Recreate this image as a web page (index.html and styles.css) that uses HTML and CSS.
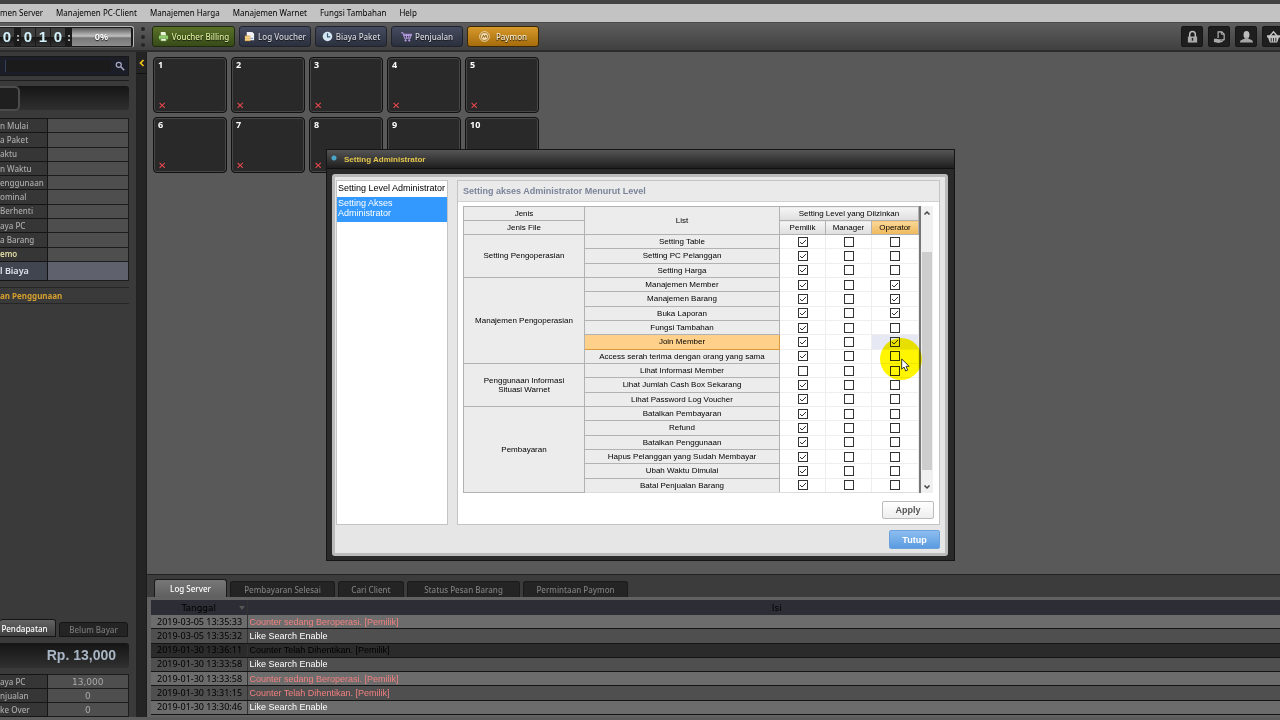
FILE: index.html
```html
<!DOCTYPE html>
<html lang="id">
<head>
<meta charset="utf-8">
<title>Setting Administrator</title>
<link rel="stylesheet" href="styles.css">
</head>
<body>
<div class="app">
  <nav class="menubar">
    <a href="#">men Server</a><a href="#">Manajemen PC-Client</a><a href="#">Manajemen Harga</a><a href="#">Manajemen Warnet</a><a href="#">Fungsi Tambahan</a><a href="#">Help</a>
  </nav>

  <header class="toolbar">
    <div class="counter">
      <span class="digit">0</span><span class="colon">:</span><span class="digit">0</span><span class="digit">1</span><span class="digit">0</span><span class="colon">:</span>
      <span class="percent">0%</span>
    </div>
    <div class="grip"><i></i><i></i><i></i></div>
    <div class="actions">
      <button class="tool green"><svg viewBox="0 0 12 12"><path d="M3 1h5l1 4H3z" fill="#e8f4d8"/><path d="M1 5h10v4H1z" fill="#8fd06a"/><path d="M3 8h6v3H3z" fill="#e8f4d8" stroke="#4c7a2c" stroke-width=".6"/></svg>Voucher Billing</button>
      <button class="tool"><svg viewBox="0 0 12 12"><path d="M3 1h6l2 2v7H3z" fill="#f2f4fa"/><path d="M1 5h6v6H1z" fill="#e8b45a"/><path d="M1 7h6M1 9h6" stroke="#fff0cc" stroke-width=".7"/><path d="M7 8h3" stroke="#6688bb"/></svg>Log Voucher</button>
      <button class="tool"><svg viewBox="0 0 12 12"><circle cx="6" cy="6" r="5.2" fill="#d4e6f2"/><path d="M6 2.5V6.5H9" stroke="#3d5b78" stroke-width="1.3" fill="none"/></svg>Biaya Paket</button>
      <button class="tool"><svg viewBox="0 0 12 12"><path d="M0 2h2l2 6h6l1.500-4.500H3M3.500 5h7M6 3.500V8M8.500 3.500V8" stroke="#b79be0" stroke-width="1.100" fill="none"/><circle cx="5" cy="10.300" r="1.200" fill="#b79be0"/><circle cx="9" cy="10.300" r="1.200" fill="#b79be0"/></svg>Penjualan</button>
      <button class="tool gold"><svg viewBox="0 0 12 12"><circle cx="6" cy="6" r="5.300" fill="#a5731c" stroke="#f4e3bd"/><circle cx="6" cy="6" r="3.800" fill="#f0dcb0"/><path d="M3.500 7.500 5 4.500 6 7l1.500-2.500L8.500 7.500" stroke="#8a5a10" fill="none"/></svg>Paymon</button>
    </div>
    <div class="shortcuts">
      <button aria-label="Kunci"><svg viewBox="0 0 14 14"><path d="M4 7V4a3 3 0 0 1 6 0v3" fill="none" stroke="#bdbdbd" stroke-width="1.600"/><path d="M2 6.500h10V13H2z" fill="#aaa"/><path d="M7 8v3" stroke="#222" stroke-width="1.600"/></svg></button>
      <button aria-label="Serah terima"><svg viewBox="0 0 14 14"><path d="M5.500 8V1.500h4L12 4v6H9" fill="none" stroke="#bbb" stroke-width="1.200"/><path d="M9 1.500V4h3" fill="none" stroke="#bbb"/><path d="M1 9h3l2 .5h3l-1 1.500 4-1-2 2.500-4 1-5-1z" fill="#aaa"/></svg></button>
      <button aria-label="Pengguna"><svg viewBox="0 0 14 14"><ellipse cx="7" cy="4.500" rx="3.200" ry="4" fill="#bdbdbd"/><path d="M0 13c0-3 3-3 5-4V7h4v2c2 1 5 1 5 4z" fill="#a6a6a6"/></svg></button>
      <button aria-label="Keranjang"><svg viewBox="0 0 14 14"><path d="M3 6 7 1.500 11 6" fill="none" stroke="#c8c8c8" stroke-width="1.500"/><path d="M0 5h14v2.500H0zM1 7h12l-2 6H3z" fill="#c4c4c4"/><path d="M4.500 8v4M7 8v4M9.500 8v4" stroke="#222"/></svg></button>
    </div>
  </header>

  <div class="body">
    <aside class="sidebar">
      <div class="side-main">
        <div class="search"><input type="text" aria-label="Cari"><button aria-label="Cari pelanggan"><svg viewBox="0 0 12 12"><circle cx="4.500" cy="4.500" r="3" fill="none" stroke="#a9abc9" stroke-width="1.500"/><path d="m7 7 4 4" stroke="#a9abc9" stroke-width="1.800"/></svg></button></div>
        <div class="slot"><span></span></div>
        <table class="info">
          <tbody>
            <tr><th>n Mulai</th><td></td></tr>
            <tr><th>a Paket</th><td></td></tr>
            <tr><th>aktu</th><td></td></tr>
            <tr><th>n Waktu</th><td></td></tr>
            <tr><th>enggunaan</th><td></td></tr>
            <tr><th>ominal</th><td></td></tr>
            <tr><th>Berhenti</th><td></td></tr>
            <tr><th>aya PC</th><td></td></tr>
            <tr><th>a Barang</th><td></td></tr>
            <tr class="memo"><th>emo</th><td></td></tr>
            <tr class="total"><th>l Biaya</th><td></td></tr>
          </tbody>
        </table>
        <div class="usage">an Penggunaan</div>
        <div class="spacer"></div>
        <div class="side-tabs"><button class="on">Pendapatan</button><button>Belum Bayar</button></div>
        <div class="amount">Rp. 13,000</div>
        <table class="info income">
          <tbody>
            <tr><th>aya PC</th><td>13,000</td></tr>
            <tr><th>njualan</th><td>0</td></tr>
            <tr><th>ke Over</th><td>0</td></tr>
          </tbody>
        </table>
      </div>
      <div class="rail"><button aria-label="Tutup panel"><svg viewBox="0 0 6 8"><path d="M4.500 1 1.500 4l3 3" fill="none" stroke="#f5c518" stroke-width="1.700"/></svg></button></div>
    </aside>

    <main class="main">
      <section class="seats">
        <div class="seat"><b>1</b><i>✕</i></div><div class="seat"><b>2</b><i>✕</i></div><div class="seat"><b>3</b><i>✕</i></div><div class="seat"><b>4</b><i>✕</i></div><div class="seat"><b>5</b><i>✕</i></div>
        <div class="seat"><b>6</b><i>✕</i></div><div class="seat"><b>7</b><i>✕</i></div><div class="seat"><b>8</b><i>✕</i></div><div class="seat"><b>9</b></div><div class="seat"><b>10</b></div>
      </section>
      <section class="log">
        <div class="log-tabs"><button class="on w1">Log Server</button><button class="w2">Pembayaran Selesai</button><button class="w3">Cari Client</button><button class="w4">Status Pesan Barang</button><button class="w2">Permintaan Paymon</button></div>
        <div class="log-body">
          <table class="log-table">
            <thead><tr><th class="date">Tanggal<svg viewBox="0 0 6 4"><path d="M0 0h6L3 4z" fill="#555"/></svg></th><th class="content">Isi</th></tr></thead>
            <tbody>
              <tr class="light"><td>2019-03-05 13:35:33</td><td class="red">Counter sedang Beroperasi. [Pemilik]</td></tr>
              <tr><td>2019-03-05 13:35:32</td><td>Like Search Enable</td></tr>
              <tr class="dark"><td>2019-01-30 13:36:11</td><td>Counter Telah Dihentikan. [Pemilik]</td></tr>
              <tr><td>2019-01-30 13:33:58</td><td>Like Search Enable</td></tr>
              <tr class="light"><td>2019-01-30 13:33:58</td><td class="red">Counter sedang Beroperasi. [Pemilik]</td></tr>
              <tr><td>2019-01-30 13:31:15</td><td class="red">Counter Telah Dihentikan. [Pemilik]</td></tr>
              <tr class="light"><td>2019-01-30 13:30:46</td><td>Like Search Enable</td></tr>
            </tbody>
          </table>
        </div>
      </section>
    </main>
  </div>
  <footer class="status"></footer>
</div>

<div class="dialog" role="dialog" aria-labelledby="dlg-title">
  <div class="dialog-title" id="dlg-title">Setting Administrator</div>
  <div class="dialog-frame">
    <div class="dialog-cols">
      <ul class="nav-list">
        <li><a href="#">Setting Level Administrator</a></li>
        <li><a href="#" class="current">Setting Akses<br>Administrator</a></li>
      </ul>
      <section class="panel">
        <h2>Setting akses Administrator Menurut Level</h2>
        <div class="panel-body">
          <div class="grid-wrap">
            <table class="access">
              <colgroup><col class="c-kind"><col class="c-list"><col class="c-level"><col class="c-level"><col></colgroup>
              <thead>
                <tr><th>Jenis</th><th rowspan="2">List</th><th colspan="3" class="lvl">Setting Level yang Diizinkan</th></tr>
                <tr><th>Jenis File</th><th class="lvl">Pemilik</th><th class="lvl">Manager</th><th class="lvl hot">Operator</th></tr>
              </thead>
              <tbody>
                <tr><th rowspan="3">Setting Pengoperasian</th><th>Setting Table</th><td><input type="checkbox" aria-label="Pemilik" checked></td><td><input type="checkbox" aria-label="Manager"></td><td><input type="checkbox" aria-label="Operator"></td></tr>
                <tr><th>Setting PC Pelanggan</th><td><input type="checkbox" aria-label="Pemilik" checked></td><td><input type="checkbox" aria-label="Manager"></td><td><input type="checkbox" aria-label="Operator"></td></tr>
                <tr><th>Setting Harga</th><td><input type="checkbox" aria-label="Pemilik" checked></td><td><input type="checkbox" aria-label="Manager"></td><td><input type="checkbox" aria-label="Operator"></td></tr>
                <tr><th rowspan="6">Manajemen Pengoperasian</th><th>Manajemen Member</th><td><input type="checkbox" aria-label="Pemilik" checked></td><td><input type="checkbox" aria-label="Manager"></td><td><input type="checkbox" aria-label="Operator" checked></td></tr>
                <tr><th>Manajemen Barang</th><td><input type="checkbox" aria-label="Pemilik" checked></td><td><input type="checkbox" aria-label="Manager"></td><td><input type="checkbox" aria-label="Operator" checked></td></tr>
                <tr><th>Buka Laporan</th><td><input type="checkbox" aria-label="Pemilik" checked></td><td><input type="checkbox" aria-label="Manager"></td><td><input type="checkbox" aria-label="Operator" checked></td></tr>
                <tr><th>Fungsi Tambahan</th><td><input type="checkbox" aria-label="Pemilik" checked></td><td><input type="checkbox" aria-label="Manager"></td><td><input type="checkbox" aria-label="Operator"></td></tr>
                <tr><th class="picked">Join Member</th><td><input type="checkbox" aria-label="Pemilik" checked></td><td><input type="checkbox" aria-label="Manager"></td><td class="focus"><input type="checkbox" aria-label="Operator" checked></td></tr>
                <tr><th>Access serah terima dengan orang yang sama</th><td><input type="checkbox" aria-label="Pemilik" checked></td><td><input type="checkbox" aria-label="Manager"></td><td><input type="checkbox" aria-label="Operator"></td></tr>
                <tr><th rowspan="3">Penggunaan Informasi<br>Situasi Warnet</th><th>Lihat Informasi Member</th><td><input type="checkbox" aria-label="Pemilik"></td><td><input type="checkbox" aria-label="Manager"></td><td><input type="checkbox" aria-label="Operator"></td></tr>
                <tr><th>Lihat Jumlah Cash Box Sekarang</th><td><input type="checkbox" aria-label="Pemilik" checked></td><td><input type="checkbox" aria-label="Manager"></td><td><input type="checkbox" aria-label="Operator"></td></tr>
                <tr><th>Lihat Password Log Voucher</th><td><input type="checkbox" aria-label="Pemilik" checked></td><td><input type="checkbox" aria-label="Manager"></td><td><input type="checkbox" aria-label="Operator"></td></tr>
                <tr><th rowspan="6">Pembayaran</th><th>Batalkan Pembayaran</th><td><input type="checkbox" aria-label="Pemilik" checked></td><td><input type="checkbox" aria-label="Manager"></td><td><input type="checkbox" aria-label="Operator"></td></tr>
                <tr><th>Refund</th><td><input type="checkbox" aria-label="Pemilik" checked></td><td><input type="checkbox" aria-label="Manager"></td><td><input type="checkbox" aria-label="Operator"></td></tr>
                <tr><th>Batalkan Penggunaan</th><td><input type="checkbox" aria-label="Pemilik" checked></td><td><input type="checkbox" aria-label="Manager"></td><td><input type="checkbox" aria-label="Operator"></td></tr>
                <tr><th>Hapus Pelanggan yang Sudah Membayar</th><td><input type="checkbox" aria-label="Pemilik" checked></td><td><input type="checkbox" aria-label="Manager"></td><td><input type="checkbox" aria-label="Operator"></td></tr>
                <tr><th>Ubah Waktu Dimulai</th><td><input type="checkbox" aria-label="Pemilik" checked></td><td><input type="checkbox" aria-label="Manager"></td><td><input type="checkbox" aria-label="Operator"></td></tr>
                <tr><th>Batal Penjualan Barang</th><td><input type="checkbox" aria-label="Pemilik" checked></td><td><input type="checkbox" aria-label="Manager"></td><td><input type="checkbox" aria-label="Operator"></td></tr>
              </tbody>
            </table>
            <div class="scroll">
              <svg viewBox="0 0 8 8"><path d="m1.500 5.500 2.500-2.500 2.500 2.500" fill="none" stroke="#444" stroke-width="1.500"/></svg>
              <span class="thumb"></span>
              <svg viewBox="0 0 8 8"><path d="m1.500 2.500 2.500 2.500 2.500-2.500" fill="none" stroke="#444" stroke-width="1.500"/></svg>
            </div>
          </div>
          <div class="panel-foot"><button class="apply">Apply</button></div>
        </div>
      </section>
    </div>
    <div class="dialog-foot"><button class="close">Tutup</button></div>
  </div>
</div>
<div class="halo"></div>
<svg class="pointer" viewBox="0 0 9 14"><path d="M.7 1v10.200l2.300-2.200 1.700 4 2-.9L5 8.300h3.200z" fill="#fff" stroke="#222" stroke-width=".9"/></svg>
</body>
</html>
```
FILE: styles.css
```css
* { box-sizing: border-box; }
body {
  margin: 0;
  height: 100vh;
  overflow: hidden;
  background: #595959;
  font-family: "Liberation Sans", Arial, sans-serif;
  font-size: 9px;
  color: #000;
}
button, input { font: inherit; margin: 0; padding: 0; border: 0; color: inherit; }
button { background: none; white-space: nowrap; }
a { color: inherit; text-decoration: none; }
table { border-collapse: collapse; border-spacing: 0; }
th, td { padding: 0; font-weight: 400; }
i { font-style: normal; }

.app { height: 100vh; display: flex; flex-direction: column; }

.menubar {
  display: flex;
  gap: 13px;
  height: 23px;
  border-top: 4px solid #434343;
  border-bottom: 1px solid #4a4a4a;
  background: #c3c3c3;
  font: 8px/18px "Noto Sans", sans-serif;
  white-space: nowrap;
}

.toolbar {
  display: flex;
  align-items: center;
  height: 29px;
  background: linear-gradient(#5d5d5d, #404040);
  border-bottom: 2px solid #2c2c2c;
  font-family: "Noto Sans", sans-serif;
}
.counter {
  display: flex;
  align-items: center;
  width: 134px;
  height: 22px;
  padding-right: 2px;
  background: #1a1a1a;
  border: 1px solid #bbb;
  border-left: 0;
  border-bottom-color: #555;
  border-radius: 0 3px 3px 0;
}
.digit {
  width: 14px;
  margin-right: 1px;
  background: linear-gradient(#3d3d3d 48%, #151515 50%, #333);
  color: #d2f1fb;
  font: bold 15px/18px "Liberation Sans Narrow", "Liberation Sans", sans-serif;
  text-align: center;
}
.colon { width: 6px; color: #ddd; font-weight: 700; font-size: 11px; text-align: center; }
.percent {
  flex: 1;
  height: 18px;
  background: linear-gradient(#5a5a5a, #c2c2c2 45%, #777 55%, #8d8d8d);
  color: #fff;
  font: bold 9px/18px "Noto Sans", sans-serif;
  text-align: center;
  text-shadow: 0 1px 1px #222;
}
.grip { display: flex; flex-direction: column; gap: 4px; width: 18px; align-items: center; }
.grip i { width: 4px; height: 4px; border-radius: 50%; background: #262626; }
.actions { display: flex; gap: 4px; }
.tool {
  display: flex;
  align-items: center;
  justify-content: center;
  gap: 3px;
  width: 72px;
  height: 21px;
  background: linear-gradient(#464c60, #2b303e);
  border: 1px solid #20232c;
  border-radius: 3px;
  color: #d8d9e2;
  font-size: 8px;
  font-weight: 500;
  text-shadow: 0 1px 1px #111;
}
.tool svg { width: 11px; height: 11px; }
.tool.green { width: 83px; background: linear-gradient(#5a7128, #374b18); color: #dff09a; border-color: #1f2b0e; }
.tool.gold { background: linear-gradient(#d6992b, #a66c0b); color: #fff0cc; border-color: #3a2808; gap: 6px; }
.shortcuts { display: flex; gap: 5px; margin-left: auto; margin-right: -4px; }
.shortcuts button {
  display: grid;
  place-items: center;
  width: 22px;
  height: 21px;
  background: #1e1e1e;
  border: 1px solid #161616;
  border-radius: 2px;
}
.shortcuts svg { width: 13px; height: 14px; }

.body { flex: 1; display: flex; min-height: 0; }

.sidebar { display: flex; width: 147px; background: #3a3a3a; }
.side-main { flex: 1; display: flex; flex-direction: column; padding: 4px 7px 0 0; border-right: 1px solid #222; min-width: 0; font-family: "Noto Sans", sans-serif; }
.rail { width: 10px; background: #242424; border-right: 1px solid #1c1c1c; }
.rail button { display: grid; place-items: center; width: 9px; height: 22px; border-bottom: 1px solid #111; }
.rail svg { width: 6px; height: 8px; }
.search { display: flex; height: 20px; background: #1b1d27; border: 1px solid #181818; border-left: 0; }
.search input { flex: 1; min-width: 0; margin: 3px 0 3px 5px; background: #1b1b1b; border-left: 1px solid #33405a; color: #ddd; }
.search button { display: grid; place-items: center; width: 17px; }
.search svg { width: 10px; height: 10px; }
.slot { height: 33px; margin-top: 4px; padding-top: 5px; border-top: 1px solid #1c1c1c; }
.slot::after { content: ""; display: block; height: 24px; margin-top: -25px; background: linear-gradient(#151515, #2f2f2f); border-radius: 0 3px 3px 0; }
.slot span { display: block; position: relative; width: 20px; height: 25px; background: #1f1f1f; border: 2px solid #4c4c4c; border-left: 0; border-radius: 0 5px 5px 0; }
.info { width: 100%; height: 163px; margin-top: 5px; table-layout: fixed; color: #aaa; font-size: 8px; font-weight: 500; line-height: 12px; }
.info th { width: 47px; border: 1px solid #151515; border-left: 0; background: #363636; font-weight: 500; text-align: left; white-space: nowrap; }
.info td { border: 1px solid #1c1c1c; background: #4e4e4e; text-align: center; }
.info .memo th { color: #e3dba2; font-weight: 600; }
.info .total { height: 19px; }
.info .total th { background: #414550; color: #dfe3ee; font-size: 9px; font-weight: 600; }
.info .total td { background: #5f626d; }
.usage { height: 17px; margin-top: 6px; border-top: 1px solid #262626; border-bottom: 1px solid #262626; color: #d5a02e; font-size: 8px; font-weight: 700; line-height: 15px; }
.spacer { flex: 1; }
.side-tabs { display: flex; align-items: flex-end; gap: 3px; }
.side-tabs button { height: 15px; width: 69px; background: #242424; border: 1px solid #151515; border-radius: 3px 3px 0 0; color: #777; font-size: 8px; font-weight: 500; }
.side-tabs .on { height: 18px; width: 56px; padding-right: 6px; background: linear-gradient(#646464, #404040); border-left: 0; color: #fff; }
.amount { height: 25px; margin: 6px 0 3px; padding-right: 13px; background: linear-gradient(#151515, #303030); border-radius: 0 3px 3px 0; color: #a9b6c5; font: bold 14px/25px "Liberation Sans", sans-serif; text-align: right; }
.info.income { height: 43px; margin-top: 3px; }
.income td { font-family: "DejaVu Sans", sans-serif; font-size: 9px; }

.main { flex: 1; display: flex; flex-direction: column; min-width: 0; }
.seats { flex: 1; display: grid; grid-template-columns: repeat(5, 74px); grid-auto-rows: 56px; gap: 4px; align-content: start; padding: 5px 6px; }
.seat { display: flex; flex-direction: column; justify-content: space-between; padding: 1px 4px 0; background: #292929; border: 1px solid #111; border-radius: 4px; box-shadow: inset 0 0 0 1px #474747; color: #fff; }
.seat b { font: bold 9px/12px "Noto Sans", sans-serif; }
.seat i { color: #f0484f; font: bold 10px/12px "DejaVu Sans", sans-serif; }

.log { border-top: 1px solid #222; background: #3c3c3c; padding-top: 4px; }
.log-tabs { display: flex; align-items: flex-end; gap: 3px; padding-left: 7px; font-family: "Noto Sans", sans-serif; }
.log-tabs button { height: 16px; background: #242424; border: 1px solid #1a1a1a; border-bottom: 0; border-radius: 3px 3px 0 0; color: #7d7d7d; font-size: 8px; font-weight: 500; }
.log-tabs .on { height: 18px; background: linear-gradient(#777, #606060); color: #fff; }
.log-tabs .w1 { width: 73px; }
.log-tabs .w2 { width: 105px; }
.log-tabs .w3 { width: 66px; }
.log-tabs .w4 { width: 113px; }
.log-body { padding: 3px 0 2px 4px; background: #626262; }
.log-table { width: 100%; height: 115px; table-layout: fixed; color: #fff; line-height: 12px; }
.log-table thead tr { height: 15px; }
.log-table th { background: #2d2e35; color: #000; font: 9px/12px "DejaVu Sans", sans-serif; }
.log-table .date { width: 96px; }
.log-table .content { padding-left: 26px; }
.date svg { float: right; width: 6px; height: 4px; margin: 4px 2px 0 -8px; }
.log-table td { padding-left: 2px; background: #4f4f4f; border-bottom: 1px solid #151515; }
.log-table td:first-child, .log-table .date { border-right: 1px solid #333; }
.log-table td:first-child { padding: 0 0 0 6px; color: #000; font: 9px/12px "Noto Sans", sans-serif; }
.log-table .light td { background: #6c6c6c; }
.log-table .dark td { background: #2b2b2b; color: #000; }
.log-table .red { color: #f28080; }
.status { height: 3px; background: #5c5c5c; }

.dialog { position: absolute; left: 326px; top: 149px; width: 629px; padding-bottom: 4px; background: #2a2a2a; border: 1px solid #151515; }
.dialog-title { height: 19px; padding-left: 17px; background: radial-gradient(circle at 7px 8px, #4aa5c8 2px, transparent 3px), linear-gradient(#555, #1e1e1e); border-bottom: 1px solid #111; color: #e5c64c; font-size: 8px; font-weight: 700; line-height: 19px; }
.dialog-frame { margin: 5px 6px 0 5px; padding: 3px 5px 4px 1px; background: #e6e6e6; border: 3px solid #bbb; border-radius: 3px; }
.dialog-cols { display: flex; gap: 9px; }
.nav-list { width: 112px; margin: 0; padding: 1px 0 0; list-style: none; background: #fff; border: 1px solid #c4c4c4; line-height: 10px; white-space: nowrap; }
.nav-list a { display: block; padding: 1px; }
.nav-list li:first-child a { padding: 1px 1px 4px; }
.nav-list .current { padding-bottom: 4px; background: #3399ff; color: #fff; }
.panel { flex: 1; background: #fff; border: 1px solid #c4c4c4; }
.panel h2 { margin: 0; padding-left: 5px; background: #eaeaea; border-bottom: 1px solid #d0d0d0; color: #7a8499; font-size: 9px; line-height: 20px; }
.panel-body { padding: 4px 5px 5px; }
.grid-wrap { display: flex; padding-right: 1px; }
.access { flex: 1; height: 287px; table-layout: fixed; font-size: 8px; line-height: 9px; }
.access thead tr { height: 14px; }
.c-kind { width: 121px; }
.c-list { width: 195px; }
.c-level { width: 46px; }
.access th { background: #ececec; border: 1px solid #b2b2b2; text-align: center; white-space: nowrap; }
.access td { border: 1px solid #eee; text-align: center; }
.access .lvl { background: linear-gradient(#f6f6f6, #dedede); }
.access .hot { background: linear-gradient(#fad898, #efb85c); }
.access .picked { background: #ffd08a; border-color: #dc9a3c; }
.access .focus { background: #e6e8f3; }
.access tbody tr:last-child > * { border-bottom-color: #ddd; }
.access input { appearance: none; display: block; width: 10px; height: 10px; margin: 0 auto; border: 1px solid #333; }
.access input:checked { background: url("data:image/svg+xml,%3Csvg xmlns='http://www.w3.org/2000/svg' viewBox='0 0 8 8'%3E%3Cpath d='M1 4l2 2 4-4' fill='none' stroke='%23333'/%3E%3C/svg%3E") center / 8px 8px; }
.scroll { display: flex; flex-direction: column; align-items: center; justify-content: space-between; width: 14px; padding: 3px 0 2px; background: #f0f0f0; border-left: 2px solid #777; }
.scroll svg { width: 8px; height: 8px; }
.thumb { width: 10px; flex: 1; margin: 35px 0 13px; background: #cdcdcd; }
.panel-foot { display: flex; justify-content: flex-end; padding-top: 8px; }
.apply { width: 52px; height: 18px; background: linear-gradient(#fff, #eee); border: 1px solid #bbb; border-radius: 2px; color: #555; font-weight: 700; }
.dialog-foot { display: flex; justify-content: flex-end; padding-top: 5px; }
.close { width: 51px; height: 19px; background: linear-gradient(#8dbdf0, #5a9be0); border: 1px solid #6ba2dd; border-radius: 2px; color: #fff; font-weight: 700; }
.halo { position: absolute; left: 880px; top: 338px; width: 42px; height: 42px; border-radius: 50%; background: #fff600; mix-blend-mode: multiply; pointer-events: none; }
.pointer { position: absolute; left: 901px; top: 358px; width: 9px; height: 14px; }
```
